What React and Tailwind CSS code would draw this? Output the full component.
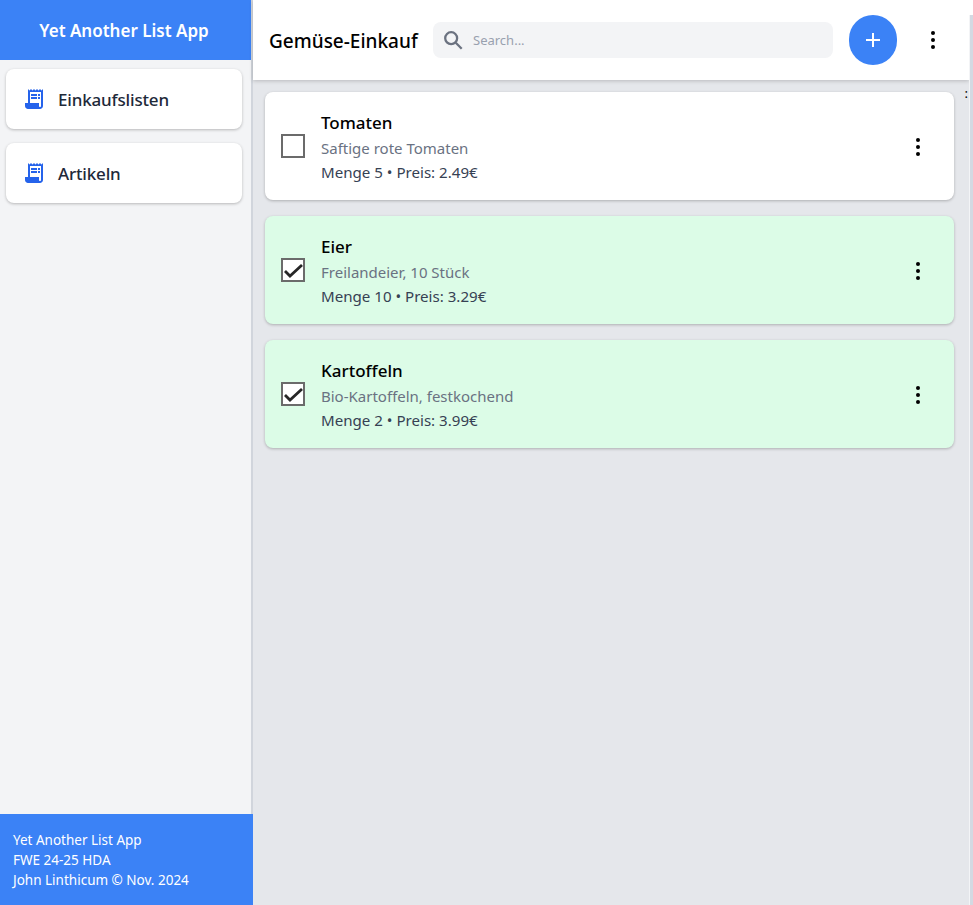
import React from 'react';
import { MdReceiptLong } from 'react-icons/md';

const font = 'font-["Noto_Sans","Open_Sans",sans-serif]';

const items = [
  { name: 'Tomaten', desc: 'Saftige rote Tomaten', meta: 'Menge 5 • Preis: 2.49€', done: false },
  { name: 'Eier', desc: 'Freilandeier, 10 Stück', meta: 'Menge 10 • Preis: 3.29€', done: true },
  { name: 'Kartoffeln', desc: 'Bio-Kartoffeln, festkochend', meta: 'Menge 2 • Preis: 3.99€', done: true },
];

function Dots({ className }) {
  return (
    <svg viewBox="0 0 24 24" fill="black" className={className}>
      <circle cx="12" cy="5" r="2" />
      <circle cx="12" cy="12" r="2" />
      <circle cx="12" cy="19" r="2" />
    </svg>
  );
}

function NavCard({ label }) {
  return (
    <div className="flex items-center h-[60px] bg-white rounded-lg shadow-[0_1px_3px_rgba(0,0,0,0.25)] pl-4 gap-3">
      <MdReceiptLong className="w-6 h-6 shrink-0 text-[#2563eb]" />
      <span className="pt-px text-[17px] font-medium tracking-[-0.01em] text-gray-800">{label}</span>
    </div>
  );
}

function Checkbox({ done }) {
  return (
    <div className="flex items-center justify-center w-6 h-6 bg-white border-2 border-[#6b6b6b] shrink-0">
      {done && (
        <svg viewBox="0 0 20 20" className="w-5 h-5" fill="none" stroke="#262626" strokeWidth="2.800">
          <path d="M2 11l5 5 12-11" />
        </svg>
      )}
    </div>
  );
}

function ItemCard({ item }) {
  return (
    <div className={`flex items-center h-[108px] rounded-lg shadow-[0_1px_3px_rgba(0,0,0,0.25)] pl-4 pr-6 ${item.done ? 'bg-[#dcfce7]' : 'bg-white'}`}>
      <Checkbox done={item.done} />
      <div className="flex-1 ml-4 mt-[2px] flex flex-col">
        <span className="text-[17px] leading-[26px] font-medium text-black">{item.name}</span>
        <span className="text-[15px] leading-[24px] text-gray-500">{item.desc}</span>
        <span className="text-[15.1px] leading-[24px] text-gray-700">{item.meta}</span>
      </div>
      <Dots className="w-6 h-6 mt-[2px]" />
    </div>
  );
}

export default function App() {
  return (
    <div className={`relative flex h-[905px] overflow-hidden bg-gray-200 ${font}`}>
      <aside className="flex flex-col w-[253px] shrink-0 bg-gray-100 border-r-2 border-gray-300">
        <div className="flex items-center justify-center h-[60px] pr-[3px] pt-[2px] bg-[#3b82f6] text-white text-[17px] font-semibold">
          Yet Another List App
        </div>
        <nav className="flex-1 flex flex-col gap-[14px] pt-[9px] pl-[6px] pr-[9px]">
          <NavCard label="Einkaufslisten" />
          <NavCard label="Artikeln" />
        </nav>
        <footer className="h-[91px] -mr-[2px] bg-[#3b82f6] text-white text-[13.5px] leading-5 pl-[13px] pt-4">
          <div>Yet Another List App</div>
          <div>FWE 24-25 HDA</div>
          <div>John Linthicum © Nov. 2024</div>
        </footer>
      </aside>
      <main className="flex-1 flex flex-col min-w-0">
        <header className="flex items-center h-20 shrink-0 bg-white shadow-[0_1px_4px_rgba(0,0,0,0.2)] pl-4 pr-6">
          <h1 className="w-[148px] shrink-0 pt-[2px] text-[19px] font-medium text-black whitespace-nowrap">Gemüse-Einkauf</h1>
          <div className="flex items-center w-[400px] h-9 ml-4 bg-gray-100 rounded-lg pl-[9px]">
            <svg viewBox="0 0 24 24" className="w-[22px] h-[22px] shrink-0" fill="none" stroke="#6b7280" strokeWidth="2.500">
              <circle cx="10" cy="10" r="6.500" />
              <path d="M15 15l6.500 6.500" />
            </svg>
            <span className="ml-[9px] pt-px text-[13px] text-gray-400">Search...</span>
          </div>
          <button className="flex items-center justify-center w-12 h-[50px] ml-4 rounded-full bg-[#3b82f6]">
            <svg viewBox="0 0 24 24" className="w-6 h-6" fill="none" stroke="white" strokeWidth="2">
              <path d="M12 5v14M5 12h14" />
            </svg>
          </button>
          <Dots className="w-6 h-6 ml-6" />
        </header>
        <div className="flex flex-col gap-4 pt-3 pl-3 pr-[15px]">
          {items.map((item) => (
            <ItemCard key={item.name} item={item} />
          ))}
        </div>
      </main>
      <div className="flex flex-col w-1 shrink-0">
        <div className="h-[15px] bg-white" />
        <div className="flex-1 bg-gray-100 border-r-[3px] border-[#d3d9e2]" />
      </div>
      <span className="absolute right-[5px] top-[85px] text-[13px] leading-4 text-black">:</span>
    </div>
  );
}
